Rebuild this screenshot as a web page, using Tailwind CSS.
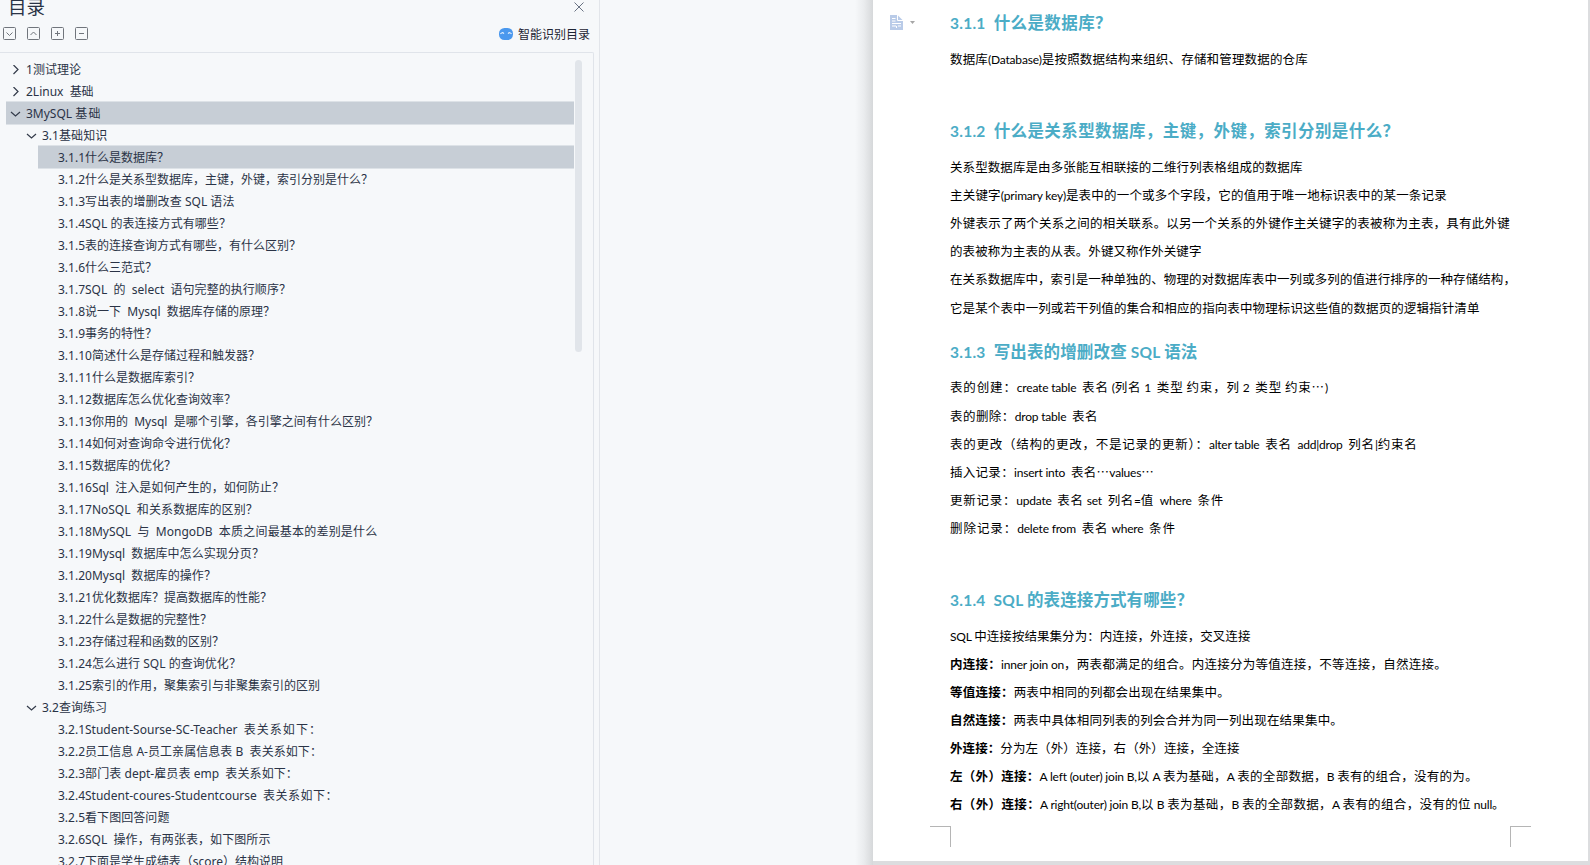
<!DOCTYPE html>
<html lang="zh-CN">
<head>
<meta charset="utf-8">
<title>目录</title>
<script src="https://cdn.jsdelivr.net/npm/@tailwindcss/browser@4"></script>
</head>
<body class="h-[865px] w-[1590px] overflow-hidden bg-[#f6f8fa]">
<div class="flex h-[865px] w-[1590px] overflow-hidden">
  <aside class="flex h-full w-[600px] shrink-0 flex-col border-r border-[#e2e5ea] text-[12px] text-[#2a3346] font-['Noto_Sans','Noto_Sans_CJK_SC',sans-serif]">
    <header class="flex h-[20px] shrink-0 items-start justify-between pl-[8px] pr-[15px]">
      <h1 class="-mt-[6px] text-[18.5px] leading-[24px] font-['Noto_Sans_CJK_SC',sans-serif]">目录</h1>
      <svg class="mt-[2px] h-[10px] w-[10px]" viewBox="0 0 10 10" fill="none" stroke="#596275" stroke-width="0.9"><path d="M.5 .5l9 9M9.500 .5l-9 9"/></svg>
    </header>
    <div class="flex h-[32px] shrink-0 items-start justify-between pl-[3px] pr-[9px] pt-[7px]">
      <div class="flex gap-[11px]">
        <svg class="h-[13px] w-[13px]" viewBox="0 0 13 13" fill="none" stroke="#70757c"><rect x=".5" y=".5" width="12" height="12" rx="1"/><path d="M3.500 5.500l3 3 3-3"/></svg>
        <svg class="h-[13px] w-[13px]" viewBox="0 0 13 13" fill="none" stroke="#70757c"><rect x=".5" y=".5" width="12" height="12" rx="1"/><path d="M3.500 8l3-3 3 3"/></svg>
        <svg class="h-[13px] w-[13px]" viewBox="0 0 13 13" fill="none" stroke="#70757c"><rect x=".5" y=".5" width="12" height="12" rx="1"/><path d="M4 6.500h5M6.500 4v5"/></svg>
        <svg class="h-[13px] w-[13px]" viewBox="0 0 13 13" fill="none" stroke="#70757c"><rect x=".5" y=".5" width="12" height="12" rx="1"/><path d="M4 6.500h5"/></svg>
      </div>
      <div class="flex items-start gap-[5px] pt-px">
        <svg class="h-[12px] w-[14px]" viewBox="0 0 14 12"><rect width="14" height="12" rx="5.500" fill="#4a98ee"/><path d="M1.500 6q1.700-2.400 3.400-.3M9.100 5.700q1.700-2.100 3.400.3" fill="none" stroke="#e6f1fd" stroke-width="1.200"/></svg>
        <span class="-mt-[3px] leading-[18px] text-[#1d2433] font-['Noto_Sans_CJK_SC',sans-serif]">智能识别目录</span>
      </div>
    </div>
    <div class="mr-[5px] flex h-[813px] gap-px overflow-hidden rounded-tr-[2px] border-r border-t border-[#e0e4ea] pt-[5px]">
      <nav id="toc" class="w-[574px] shrink-0 pl-[6px]"></nav>
      <div class="mt-[2px] h-[292px] w-[7px] rounded-full bg-[#e1e5ea]"></div>
    </div>
  </aside>
  <main class="flex h-full flex-1 bg-[#f6f8fa]">
    <div class="w-[255px] shrink-0"></div>
    <div class="h-full w-[18px] shrink-0 bg-linear-to-r from-[#f6f8fa] via-[#eaecee] to-[#d6d8da]"></div>
    <div class="flex h-full w-[717px] flex-col bg-[#dcdddf] pr-[2px]">
      <article class="flex h-[861px] flex-col bg-white">
        <div class="flex h-[826px]">
          <div class="flex w-[77px] gap-[7px] pl-[17px] pt-[15px]">
            <svg class="h-[15px] w-[13px]" viewBox="0 0 13 15"><path d="M0 0h7.500L13 5.500V15H0z" fill="#b9cbe8"/><path d="M7.500 0v5.500H13M2 3.500h3.500M2 6h3.500M2 8.500h9M2 11h4M8 11h3M6.500 11v2" fill="none" stroke="#fff"/></svg>
            <svg class="mt-[6px] h-[3px] w-[5px]" viewBox="0 0 5 3"><path d="M0 0h5L2.500 3z" fill="#a6a6a6"/></svg>
          </div>
          <div id="doc" class="flex-1 text-black font-['Lato','Noto_Sans_CJK_SC',sans-serif]"></div>
        </div>
        <div class="flex justify-between pl-[57px] pr-[57px]">
          <div class="h-[21px] w-[21px] border-r border-t border-[#b5b5b5]"></div>
          <div class="h-[21px] w-[21px] border-l border-t border-[#b5b5b5]"></div>
        </div>
      </article>
    </div>
  </main>
</div>
<script>
// Outline entries: level, text, arrow, advance width, selected
const toc = [
  [0,'1测试理论','right',55],[0,'2Linux  基础','right',67.5],[0,'3MySQL 基础','down',76,true],[1,'3.1基础知识','down',65.5],
  [2,'3.1.1什么是数据库？','',111,true],
  [2,'3.1.2什么是关系型数据库，主键，外键，索引分别是什么？','',315],
  [2,'3.1.3写出表的增删改查 SQL 语法','',176.5],
  [2,'3.1.4SQL 的表连接方式有哪些？','',173],
  [2,'3.1.5表的连接查询方式有哪些，有什么区别？','',243],
  [2,'3.1.6什么三范式？','',99],
  [2,'3.1.7SQL  的  select  语句完整的执行顺序？','',233],
  [2,'3.1.8说一下  Mysql  数据库存储的原理？','',217],
  [2,'3.1.9事务的特性？','',99],
  [2,'3.1.10简述什么是存储过程和触发器？','',202],
  [2,'3.1.11什么是数据库索引？','',142],
  [2,'3.1.12数据库怎么优化查询效率？','',178],
  [2,'3.1.13你用的  Mysql  是哪个引擎，各引擎之间有什么区别？','',320],
  [2,'3.1.14如何对查询命令进行优化？','',178],
  [2,'3.1.15数据库的优化？','',118],
  [2,'3.1.16Sql  注入是如何产生的，如何防止？','',226],
  [2,'3.1.17NoSQL  和关系数据库的区别？','',200],
  [2,'3.1.18MySQL  与  MongoDB  本质之间最基本的差别是什么','',319.5],
  [2,'3.1.19Mysql  数据库中怎么实现分页？','',206],
  [2,'3.1.20Mysql  数据库的操作？','',158],
  [2,'3.1.21优化数据库？提高数据库的性能？','',214],
  [2,'3.1.22什么是数据的完整性？','',154],
  [2,'3.1.23存储过程和函数的区别？','',166],
  [2,'3.1.24怎么进行 SQL 的查询优化？','',183],
  [2,'3.1.25索引的作用，聚集索引与非聚集索引的区别','',262],
  [1,'3.2查询练习','down',65],
  [2,'3.2.1Student-Sourse-SC-Teacher  表关系如下：','',264],
  [2,'3.2.2员工信息 A-员工亲属信息表 B  表关系如下：','',264],
  [2,'3.2.3部门表 dept-雇员表 emp  表关系如下：','',240],
  [2,'3.2.4Student-coures-Studentcourse  表关系如下：','',280],
  [2,'3.2.5看下图回答问题','',111.5],
  [2,'3.2.6SQL  操作，有两张表，如下图所示','',212.5],
  [2,'3.2.7下面是学生成绩表（score）结构说明','',225],
];
// Document lines: vertical centre, text, advance width, heading flag; *…* marks bold
const doc = [
  [22.5,'3.1.1  什么是数据库？',162,true],
  [59,'数据库(Database)是按照数据结构来组织、存储和管理数据的仓库',358],
  [130,'3.1.2  什么是关系型数据库，主键，外键，索引分别是什么？',449.5,true],
  [166,'关系型数据库是由多张能互相联接的二维行列表格组成的数据库',352.5],
  [195,'主关键字(primary key)是表中的一个或多个字段，它的值用于唯一地标识表中的某一条记录',497],
  [222,'外键表示了两个关系之间的相关联系。以另一个关系的外键作主关键字的表被称为主表，具有此外键',560],
  [250,'的表被称为主表的从表。外键又称作外关键字',251.5],
  [278,'在关系数据库中，索引是一种单独的、物理的对数据库表中一列或多列的值进行排序的一种存储结构，',566],
  [307,'它是某个表中一列或若干列值的集合和相应的指向表中物理标识这些值的数据页的逻辑指针清单',529.5],
  [352,'3.1.3  写出表的增删改查 SQL 语法',247.5,true],
  [387,'表的创建：create table  表名 (列名 1  类型 约束，列 2  类型 约束…)',378],
  [416,'表的删除：drop table  表名',148],
  [444,'表的更改（结构的更改，不是记录的更新）：alter table  表名  add|drop  列名|约束名',467.5],
  [472,'插入记录：insert into  表名…values…',204],
  [500,'更新记录：update  表名 set  列名=值  where  条件',274],
  [528,'删除记录：delete from  表名 where  条件',226],
  [599.5,'3.1.4  SQL 的表连接方式有哪些？',243,true],
  [636,'SQL 中连接按结果集分为：内连接，外连接，交叉连接',300.5],
  [664,'*内连接：*inner join on，两表都满足的组合。内连接分为等值连接，不等连接，自然连接。',497],
  [691.5,'*等值连接：*两表中相同的列都会出现在结果集中。',280],
  [719.5,'*自然连接：*两表中具体相同列表的列会合并为同一列出现在结果集中。',393],
  [747.5,'*外连接：*分为左（外）连接，右（外）连接，全连接',289.5],
  [776,'*左（外）连接：*A left (outer) join B,以 A 表为基础，A 表的全部数据，B 表有的组合，没有的为。',528],
  [804,'*右（外）连接：*A right(outer) join B,以 B 表为基础，B 表的全部数据，A 表有的组合，没有的位 null。',555],
];
// Spread the difference between natural and wanted width over the CJK runs
const boxes = [];
function fitAll() {
  boxes.forEach(([box, want]) => {
    const runs = [...box.querySelectorAll('[data-cjk]')];
    runs.forEach(r => r.style.letterSpacing = '0px');
    const n = runs.reduce((s, r) => s + r.textContent.length, 0);
    const d = want - box.getBoundingClientRect().width;
    if (n) runs.forEach(r => r.style.letterSpacing = (d / n) + 'px');
  });
}
function fill(box, text, cjk, latin) {
  let bold = false;
  text.split('*').forEach(part => {
    (part.match(/[\x20-\x7e]+|[^\x20-\x7e]+/g) || []).forEach(run => {
      const s = document.createElement('span');
      const isLatin = /^[\x20-\x7e]/.test(run);
      s.className = isLatin ? latin : cjk;
      if (bold) s.classList.add('font-bold');
      if (!isLatin) s.dataset.cjk = '';
      s.textContent = run;
      box.append(s);
    });
    bold = !bold;
  });
}
const nav = document.getElementById('toc');
toc.forEach(([level, text, arrow, w, on]) => {
  const row = document.createElement('div');
  row.className = 'flex h-[22px] items-center ' + ['', 'ml-[16px]', 'ml-[32px]'][level] + (on ? ' bg-[#c7ced6] shadow-[0_-1px_0_#dde2e7,0_1px_0_#dde2e7]' : '');
  const a = { right: 'M3.500 0l4.500 4.500L3.500 9', down: 'M1 3l4.500 4L10 3', '': '' }[arrow];
  row.innerHTML = '<svg class="ml-[4px] mr-[5px] mt-px h-[10px] w-[11px] shrink-0" viewBox="0 0 11 10" fill="none" stroke="#333b4a" stroke-width="1.200"><path d="' + a + '"/></svg>';
  const t = document.createElement('span');
  t.className = 'inline-block shrink-0 whitespace-pre leading-[22px]';
  fill(t, text, "font-['Noto_Sans_CJK_SC',sans-serif]", '');
  row.append(t); nav.append(row);
  boxes.push([t, w]);
});
const page = document.getElementById('doc');
// Each row is centred on its line position; margins make up the paragraph spacing
let y = 0;
doc.forEach(([centre, text, w, head]) => {
  const row = document.createElement('div');
  row.className = 'flex h-[28px] items-center';
  row.style.marginTop = (centre - 14 - y) + 'px';
  y = centre + 14;
  const t = document.createElement('span');
  t.className = 'inline-block shrink-0 whitespace-pre leading-[28px]' + (head ? ' text-[#4bacc6] font-bold' : '');
  if (head) fill(t, text, 'text-[16.5px]', 'text-[15.5px] tracking-[0.25px]');
  else fill(t, text, "text-[12.5px] font-['Noto_Sans_CJK_SC',sans-serif]", 'text-[12px] tracking-[-0.2px]');
  // The closing question mark of a heading sits in the middle of its cell
  if (head && text.endsWith('？')) {
    const last = t.lastChild, q = last.cloneNode();
    last.textContent = last.textContent.slice(0, -1);
    q.textContent = '？';
    q.classList.add("font-['Noto_Sans_CJK_JP',sans-serif]");
    t.append(q);
  }
  row.append(t); page.append(row);
  boxes.push([t, w]);
});
// Widths depend on the stylesheet and fonts, so measure again once both are in
fitAll();
new ResizeObserver(fitAll).observe(nav);
addEventListener('load', () => { fitAll(); document.fonts.ready.then(fitAll); setTimeout(fitAll, 60); });
</script>
</body>
</html>
